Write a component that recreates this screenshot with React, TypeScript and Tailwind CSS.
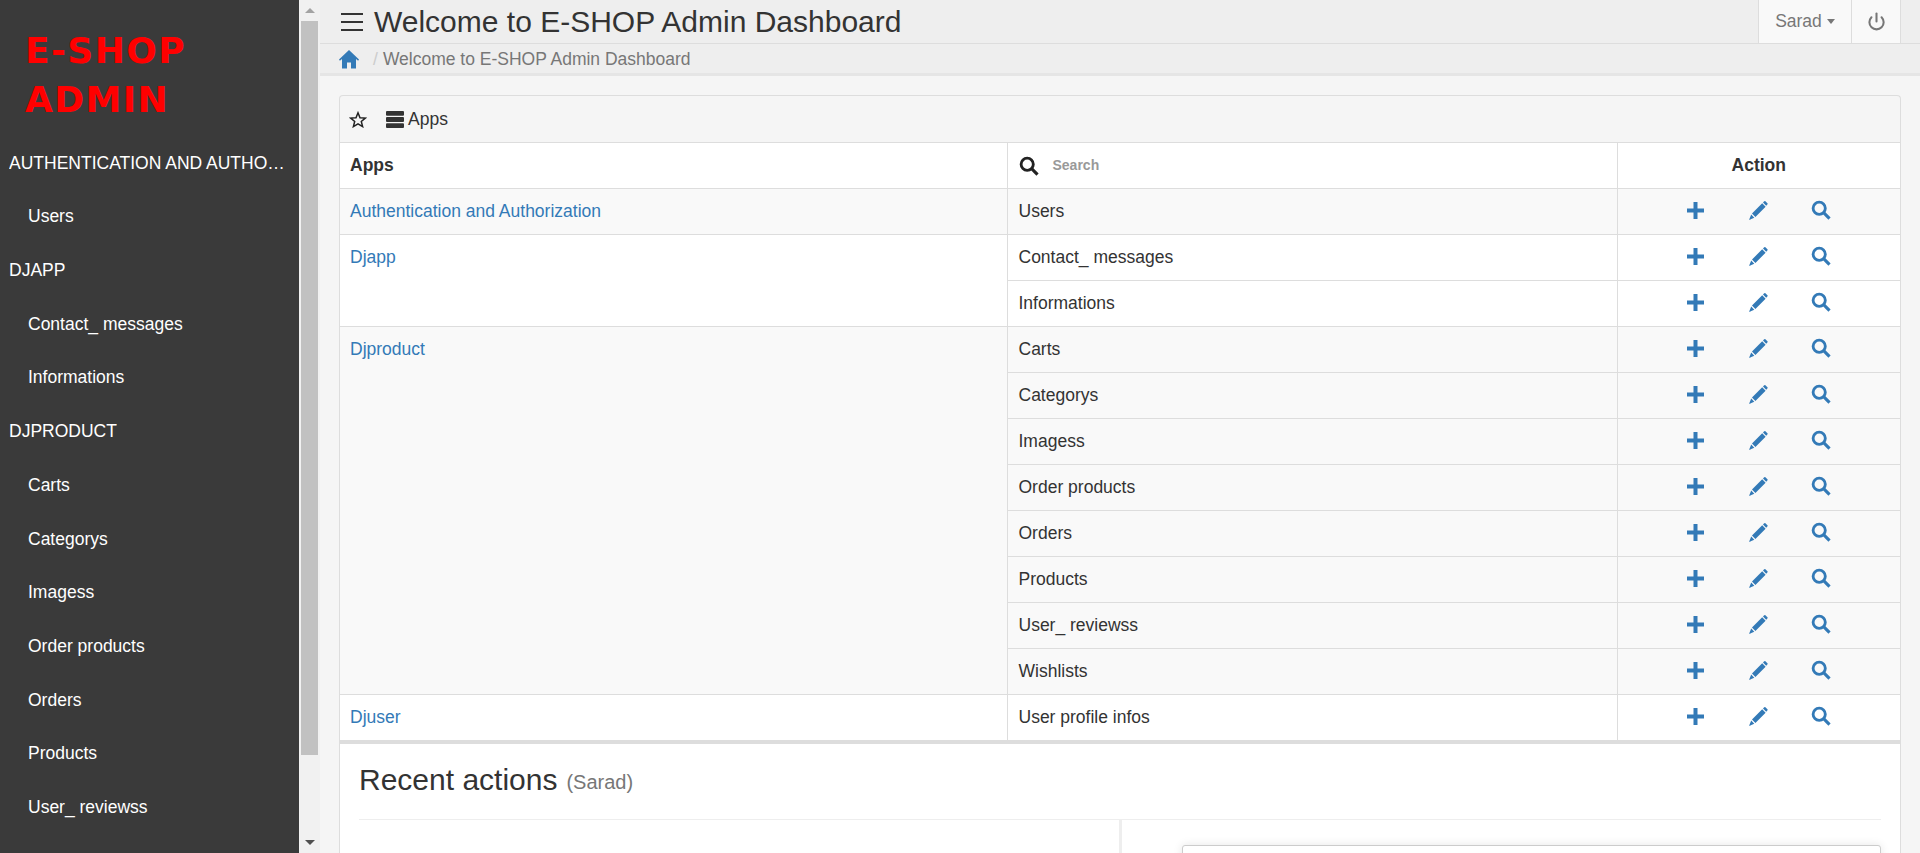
import { Power } from "lucide-react";

const sidebar = [
  { title: "AUTHENTICATION AND AUTHORIZATION", items: ["Users"] },
  { title: "DJAPP", items: ["Contact_ messages", "Informations"] },
  { title: "DJPRODUCT", items: ["Carts", "Categorys", "Imagess", "Order products", "Orders", "Products", "User_ reviewss", "Wishlists"] },
];

const apps = [
  { name: "Authentication and Authorization", shaded: true, models: ["Users"] },
  { name: "Djapp", shaded: false, models: ["Contact_ messages", "Informations"] },
  { name: "Djproduct", shaded: true, models: ["Carts", "Categorys", "Imagess", "Order products", "Orders", "Products", "User_ reviewss", "Wishlists"] },
  { name: "Djuser", shaded: false, models: ["User profile infos"] },
];

function PlusIcon() {
  return (
    <svg viewBox="0 0 17 17" className="h-[17px] w-[17px] fill-[#337ab7]">
      <path d="M6.5 0h4v6.5H17v4h-6.5V17h-4v-6.5H0v-4h6.5z" />
    </svg>
  );
}

function PencilIcon() {
  return (
    <svg viewBox="0 0 19 19" className="h-[19px] w-[19px] fill-[#337ab7]">
      <path d="M15.2.3l.9-.3 2.6 2.6-.3.9-1.2 1.2-3.2-3.2zM13.2 2.3l3.4 3.4L6.4 15.9 3 12.5zM2.2 13.6l3.1 3.1L0 19z" />
    </svg>
  );
}

function SearchIcon({ color = "#337ab7" }: { color?: string }) {
  return (
    <svg viewBox="0 0 19 19" className="h-5 w-5" fill="none" stroke={color}>
      <circle cx="7.8" cy="7.8" r="5.8" strokeWidth="2.7" />
      <path d="M12 12l5.6 5.6" strokeWidth="3" />
    </svg>
  );
}

function HomeIcon() {
  return (
    <svg viewBox="0 0 20 19" className="h-[19px] w-5 fill-[#337ab7]">
      <path d="M10 0l10 9.6-.9 1.1L17 9v9.5h-5V12.5H8v6H3V9L.9 10.7 0 9.6z" />
    </svg>
  );
}

function StarIcon() {
  return (
    <svg viewBox="0 0 18 17" className="h-[17px] w-[18px]" fill="none" stroke="#222" strokeWidth="1.5">
      <path d="M9 1.8l2 4.9 5.3.4-4 3.4 1.3 5.1L9 12.9l-4.6 2.7 1.3-5.1-4-3.4 5.3-.4z" />
    </svg>
  );
}

function TasksIcon() {
  return (
    <svg viewBox="0 0 18 17" className="h-[17px] w-[18px] fill-[#333]">
      <rect y="0" width="18" height="4.8" rx="1" />
      <rect y="6.1" width="18" height="4.8" rx="1" />
      <rect y="12.2" width="18" height="4.8" rx="1" />
    </svg>
  );
}

function Sidebar() {
  return (
    <aside className="flex h-full w-[299px] shrink-0 flex-col overflow-hidden bg-[#3a3a3a] text-[17.5px] text-white">
      <h1 className="mt-[26px] shrink-0 pl-[25px] font-['Comic_Sans_MS','DejaVu_Sans',cursive] text-[36px] leading-[49px] font-bold tracking-[1.4px] text-[#ff0000]">
        E-SHOP
        <br />
        ADMIN
      </h1>
      <nav className="mt-[12px] shrink-0">
        {sidebar.map((group) => (
          <div key={group.title}>
            <div className="flex h-[53.7px] items-center pr-[9px] pl-[9px]">
              <span className="truncate">{group.title}</span>
            </div>
            {group.items.map((item) => (
              <div key={item} className="flex h-[53.7px] items-center pl-[28px]">
                {item}
              </div>
            ))}
          </div>
        ))}
      </nav>
    </aside>
  );
}

function FakeScrollbar() {
  return (
    <div className="flex h-full w-[21px] shrink-0 flex-col items-center bg-[#f1f1f1]">
      <div className="flex h-[21px] items-center justify-center">
        <div className="h-0 w-0 border-x-[5px] border-b-[5px] border-x-transparent border-b-[#a3a3a3]" />
      </div>
      <div className="h-[734px] w-[17px] bg-[#c1c1c1]" />
      <div className="flex-1" />
      <div className="flex h-[21px] items-center justify-center">
        <div className="h-0 w-0 border-x-[5px] border-t-[5px] border-x-transparent border-t-[#505050]" />
      </div>
    </div>
  );
}

function Header() {
  return (
    <header className="flex h-[44px] shrink-0 items-stretch border-b border-[#ddd] bg-[#eee]">
      <div className="flex flex-1 items-center pl-[21px]">
        <div className="flex w-[22px] flex-col gap-[6px]">
          <div className="h-[2px] bg-[#333]" />
          <div className="h-[2px] bg-[#333]" />
          <div className="h-[2px] bg-[#333]" />
        </div>
        <div className="ml-[11px] text-[30px] leading-[42px] text-[#333]">Welcome to E-SHOP Admin Dashboard</div>
      </div>
      <div className="flex w-[93px] items-center justify-center gap-[5px] border-l border-[#ddd] bg-[#f9f9f9] text-[17.5px] text-[#777]">
        Sarad
        <div className="h-0 w-0 border-x-[4.5px] border-t-[5px] border-x-transparent border-t-[#777]" />
      </div>
      <div className="flex w-[50px] items-center justify-center border-x border-[#ddd] bg-[#f9f9f9]">
        <Power className="h-[19px] w-[19px] text-[#777]" strokeWidth={2.6} />
      </div>
      <div className="w-[19px]" />
    </header>
  );
}

function Breadcrumb() {
  return (
    <div className="flex h-[32px] shrink-0 items-center border-b-[3px] border-[#e5e5e5] bg-[#eee] pt-[1px] pl-[19px] text-[17.5px] text-[#777]">
      <HomeIcon />
      <span className="mr-[5px] ml-[14px] text-[#ccc]">/</span>
      Welcome to E-SHOP Admin Dashboard
    </div>
  );
}

function AppsTable() {
  return (
    <table className="w-full shrink-0 table-fixed border-collapse text-[17.5px] text-[#333]">
      <colgroup>
        <col className="w-[667px]" />
        <col className="w-[610px]" />
        <col />
      </colgroup>
      <thead>
        <tr className="h-[46px] bg-white">
          <th className="border border-l-0 border-[#ddd] px-[10px] text-left font-bold">Apps</th>
          <th className="border border-[#ddd] px-[11px] text-left">
            <div className="flex items-center">
              <SearchIcon color="#222" />
              <span className="ml-[14px] text-[14px] font-bold text-[#999]">Search</span>
            </div>
          </th>
          <th className="border border-r-0 border-[#ddd] text-center font-bold">Action</th>
        </tr>
      </thead>
      <tbody>
        {apps.map((app) =>
          app.models.map((model, i) => (
            <tr key={model} className={`h-[46px] ${app.shaded ? "bg-[#f9f9f9]" : "bg-white"}`}>
              {i === 0 && (
                <td rowSpan={app.models.length} className="border border-l-0 border-[#ddd] px-[10px] pt-[9px] align-top text-[#337ab7]">
                  {app.name}
                </td>
              )}
              <td className="border border-[#ddd] pr-[10px] pl-[11px]">{model}</td>
              <td className="border border-r-0 border-[#ddd] pb-[3px] pl-[47px]">
                <div className="flex items-center">
                  <div className="flex w-[62.6px] justify-center"><PlusIcon /></div>
                  <div className="flex w-[62.6px] justify-center"><PencilIcon /></div>
                  <div className="flex w-[62.6px] justify-center"><SearchIcon /></div>
                </div>
              </td>
            </tr>
          )),
        )}
      </tbody>
    </table>
  );
}

function RecentActions() {
  return (
    <section className="flex-1 border-t-[3px] border-[#ddd] bg-white px-[19px]">
      <h2 className="flex h-[75px] items-center pb-[4px] text-[#333]">
        <span className="text-[30px]">Recent actions</span>
        <span className="mt-[5px] ml-[9px] text-[20px] text-[#777]">(Sarad)</span>
      </h2>
      <div className="flex border-t border-[#eee]">
        <div className="h-[40px] w-[763px] border-r-[3px] border-[#eee]" />
        <div className="flex-1 pt-[25px] pl-[60px]">
          <div className="h-[40px] rounded-t-[3px] border border-[#ccc] bg-white shadow-[0_0_10px_rgba(0,0,0,0.1)]" />
        </div>
      </div>
    </section>
  );
}

export default function App() {
  return (
    <div className="flex h-[853px] w-[1920px] overflow-hidden bg-[#f5f5f5] font-['Liberation_Sans',Arial,sans-serif]">
      <Sidebar />
      <FakeScrollbar />
      <main className="flex min-w-0 flex-1 flex-col">
        <Header />
        <Breadcrumb />
        <div className="flex min-h-0 flex-1 flex-col pt-[19px] pr-[19px] pl-[19px]">
          <div className="flex flex-1 flex-col overflow-hidden rounded-t-[4px] border-x border-t border-[#ddd] bg-[#f5f5f5]">
            <div className="flex h-[46px] shrink-0 items-center gap-[19px] pl-[9px] text-[17.5px] text-[#333]">
              <StarIcon />
              <div className="flex items-center gap-[4px]">
                <TasksIcon />
                Apps
              </div>
            </div>
            <AppsTable />
            <RecentActions />
          </div>
        </div>
      </main>
    </div>
  );
}
